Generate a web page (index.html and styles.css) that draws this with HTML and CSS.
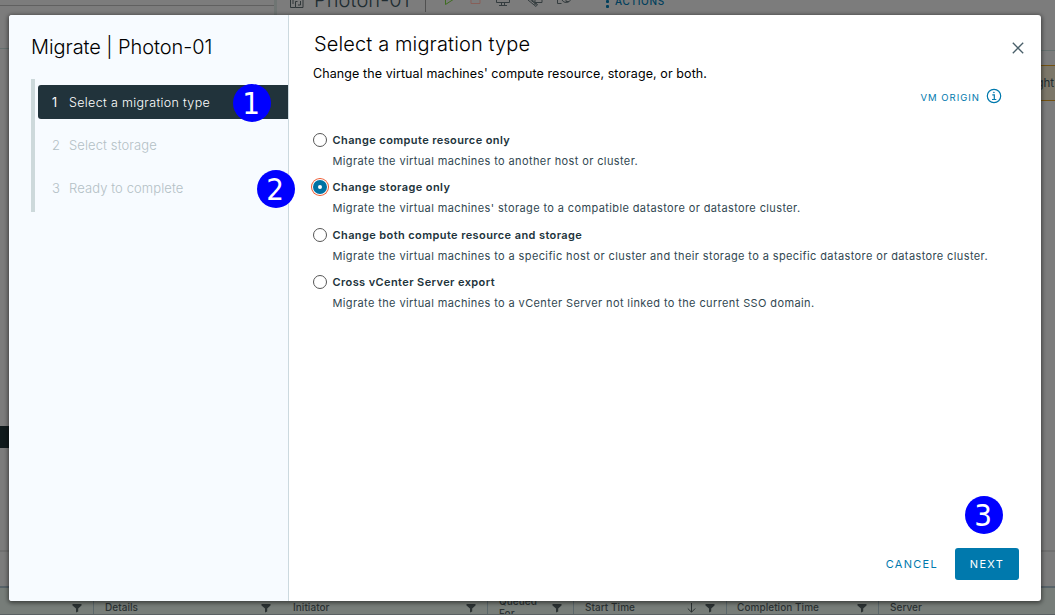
FILE: index.html
```html
<!DOCTYPE html>
<html lang="en">
<head>
<meta charset="utf-8">
<title>Migrate | Photon-01</title>
<link rel="stylesheet" href="styles.css">
</head>
<body>
<svg class="defs" width="0" height="0"><symbol id="funnel" viewBox="0 0 10 9"><path d="M.5 0h9v1.600L6.200 4.600V7.600L4 8.600V4.600L.5 1.600z" fill="currentColor"/></symbol></svg>
<div class="app">
  <div class="workspace">
    <aside class="inventory"><div class="inv-tabs"></div><div class="inv-tools"></div><div class="inv-tree"></div><div class="inv-selected"></div></aside>
    <main class="vm">
      <header class="vm-header">
        <svg class="vm-icon" width="16" height="9" viewBox="0 0 16 9" fill="none" stroke="currentColor"><path d="M1.500 0v7.500h5M6.500 1.500v6h7.500V0M4 0v4M6.500 1.500h2M9 5h2.500V1"/></svg>
        <div class="vm-name">Photon-01</div>
        <div class="vm-sep"></div>
        <svg class="vm-actions" width="150" height="9" viewBox="0 0 150 9" fill="none" stroke="currentColor"><path stroke="#3f6d20" d="M.5-1v5.500L9-1"/><path stroke="#875f58" d="M26 0v3.500h9V0"/><path d="M51.500 0v2.500h13V0M54 5.500h8M56.500 2.500v3M59.500 2.500v3"/><path d="M83 0l8 6.500 1.500-2-6-5M85.500 0l6 4.500M90 2.500h7V0M90 0v5"/><path d="M112.500 0v3.500h4M117 0a4.800 4.800 0 0 0 8.500 0M121-1v2.500h3"/></svg>
        <div class="dots"><i></i><i></i></div><div class="vm-menu">ACTIONS</div>
      </header>
      <div class="vm-banner">ght</div>
    </main>
  </div>
  <div class="splitter"></div>
  <div class="tasks">
    <div class="cell c0"><span></span><svg><use href="#funnel"/></svg></div>
    <div class="cell c1"><span>Details</span><svg><use href="#funnel"/></svg></div>
    <div class="cell c2"><span>Initiator</span><svg><use href="#funnel"/></svg></div>
    <div class="cell c3"><span>Queued<br>For</span><svg><use href="#funnel"/></svg></div>
    <div class="cell c4"><span>Start Time</span><svg class="sort" viewBox="0 0 10 10" fill="none" stroke="currentColor"><path d="M4.500 0v9M.8 5.500l3.700 3.700 3.700-3.700"/></svg><svg><use href="#funnel"/></svg></div>
    <div class="cell c5"><span>Completion Time</span><svg><use href="#funnel"/></svg></div>
    <div class="cell c6"><span>Server</span></div>
  </div>
</div>

<div class="modal">
  <nav class="side">
    <h1 class="side-title">Migrate | Photon-01</h1>
    <ol class="steps">
      <li class="step active"><b class="num">1</b><span>Select a migration type</span></li>
      <li class="step"><b class="num">2</b><span>Select storage</span></li>
      <li class="step"><b class="num">3</b><span>Ready to complete</span></li>
    </ol>
  </nav>
  <section class="content">
    <div class="head"><h2 class="title">Select a migration type</h2>
      <svg class="close" width="12" height="12" viewBox="0 0 12 12" stroke="#495f69" stroke-width="1.300"><path d="M.8.8l10.400 10.400M11.200.8L.8 11.200"/></svg></div>
    <p class="subtitle">Change the virtual machines' compute resource, storage, or both.</p>
    <div class="origin"><span>VM ORIGIN</span>
      <svg width="16" height="16" viewBox="0 0 16 16" fill="none" stroke="#0079ad" stroke-width="1.200"><circle cx="8" cy="8" r="6.700"/><path d="M6.300 6.900H8.300v4.500M6 11.500h4.300"/><circle cx="7.900" cy="4.400" r=".5" fill="#0079ad" stroke-width=".6"/></svg></div>
    <div class="options">
      <div class="option"><i class="radio"></i><div><div class="label">Change compute resource only</div><div class="desc">Migrate the virtual machines to another host or cluster.</div></div></div>
      <div class="option"><i class="radio checked"></i><div><div class="label">Change storage only</div><div class="desc">Migrate the virtual machines' storage to a compatible datastore or datastore cluster.</div></div></div>
      <div class="option"><i class="radio"></i><div><div class="label">Change both compute resource and storage</div><div class="desc">Migrate the virtual machines to a specific host or cluster and their storage to a specific datastore or datastore cluster.</div></div></div>
      <div class="option"><i class="radio"></i><div><div class="label">Cross vCenter Server export</div><div class="desc">Migrate the virtual machines to a vCenter Server not linked to the current SSO domain.</div></div></div>
    </div>
    <footer class="footer"><span class="cancel">CANCEL</span><span class="next">NEXT</span></footer>
  </section>
</div>
<div class="badge b1">1</div>
<div class="badge b2">2</div>
<div class="badge b3">3</div>
</body>
</html>
```
FILE: styles.css
```css
* { box-sizing: border-box; }
body { margin: 0; width: 1055px; height: 615px; overflow: hidden; background: #7c7c7c; font-family: Inter, "Liberation Sans", sans-serif; color: #000; }
.defs { position: absolute; }
h1, h2, p, ol { margin: 0; padding: 0; font-weight: 300; list-style: none; }

.app { height: 615px; display: flex; flex-direction: column; color: #202c31; }
.workspace { height: 550px; flex: none; display: flex; }
.inventory { width: 277px; border-right: 3px solid #6f7573; }
.inv-tabs { height: 6px; border-bottom: 1px solid #606060; }
.inv-tools { height: 43px; border-bottom: 1px solid #65706f; }
.inv-tree { height: 377px; }
.inv-selected { height: 22px; background: #101a1c; }
.vm { flex: 1; }
.vm-header { height: 51px; padding-left: 12px; display: flex; align-items: flex-start; border-bottom: 1px solid #65706f; }
.vm-icon { color: #303739; }
.vm-name { width: 111px; margin: -12px 0 0 9px; font-size: 20px; line-height: 24px; font-weight: 300; letter-spacing: .1px; }
.vm-sep { width: 1px; height: 12px; background: #505050; }
.vm-actions { margin-left: 19px; color: #343c3f; }
.dots { margin: 0 6px 0 11px; display: grid; gap: 2px; }
.dots i { width: 3px; height: 3px; border-radius: 1px; background: #003f5c; }
.vm-menu { margin-top: -5px; font-size: 10px; line-height: 13px; letter-spacing: .7px; color: #003f5c; font-weight: 500; }
.vm-banner { height: 36px; margin-top: 14px; padding-right: 1px; text-align: right; font-size: 11.500px; line-height: 34px; background: #7c7769; border: solid #745211; border-width: 1px 0; }
.splitter { height: 38px; flex: none; border-top: 2px solid #707070; border-bottom: 2px solid #586369; }
.tasks { height: 27px; display: flex; background: #777d79; border-bottom: 1px solid #5a6062; overflow: hidden; }
.cell { display: flex; align-items: center; justify-content: space-between; border-right: 1px solid #5b676b; padding: 0 11px; font-size: 10px; line-height: 12px; font-weight: 500; letter-spacing: .05px; height: 37px; color: #2b3233; }
.cell svg { width: 10px; height: 9px; flex: none; margin-top: 3px; }
.cell .sort { height: 10px; margin: 2px 8px 0 auto; }
.c0 { width: 94px; }
.c1 { width: 188px; border: 0; }
.c2 { width: 206px; }
.c3 { width: 86px; }
.c4 { width: 153px; }
.c5 { width: 152px; padding-left: 10px; }
.c6 { border: 0; }

.modal { position: absolute; left: 9px; top: 15px; width: 1032px; height: 586px; display: flex; background: #fff; border-radius: 3px; overflow: hidden; box-shadow: 0 1px 4px 1px rgba(0,0,0,.5); }
.side { width: 280px; background: #f7fbff; border-right: 1px solid #ccd9df; padding: 20px 0 0 22px; }
.side-title { font-size: 20px; line-height: 24px; letter-spacing: -.07px; white-space: nowrap; }
.steps { margin-top: 20px; height: 133px; border-left: 4px solid #cdd9db; padding: 6px 0 0 3px; }
.step { height: 34px; margin-bottom: 9.500px; padding: 0 0 2px 14px; display: flex; align-items: center; font-size: 13px; letter-spacing: .1px; white-space: nowrap; color: #b3c0c5; }
.num { width: 17px; font-weight: 300; }
.active { background: #21333b; color: #fff; border-radius: 3px 0 0 3px; padding-bottom: 0; font-size: 12.500px; letter-spacing: .34px; }
.active .num { font-weight: 400; }

.content { flex: 1; display: flex; flex-direction: column; padding: 17px 22px 21px 24px; }
.head { display: flex; justify-content: space-between; height: 32px; }
.title { font-size: 20px; line-height: 24px; letter-spacing: .13px; white-space: nowrap; padding-left: 1px; }
.close { margin: 10px -5px 0 0; }
.subtitle { font-size: 12.500px; line-height: 20px; letter-spacing: .09px; font-weight: 400; white-space: nowrap; }
.origin { display: flex; justify-content: flex-end; align-items: center; height: 16px; margin: 4px 17px 0 0; gap: 6px; color: #0079ad; font-size: 9.500px; letter-spacing: 1px; }
.origin span { padding-top: 2px; }
.options { margin-top: 27px; flex: 1; display: grid; grid-template-rows: 47px 48px 47px 47px; align-content: start; }
.option { display: flex; gap: 5.500px; color: #314751; }
.radio { width: 14px; height: 14px; margin-top: 2px; border: 1px solid #565656; border-radius: 50%; background: #fff; }
.checked { border: 5px solid #0072a3; box-shadow: 0 0 0 1px #fff, 0 0 0 2px #ed5930; }
.label { font-size: 11px; line-height: 18px; font-weight: 600; letter-spacing: .4px; color: #21333b; white-space: nowrap; }
.desc { margin-top: 3px; font-size: 11px; line-height: 18px; letter-spacing: .385px; white-space: nowrap; }
.footer { display: flex; justify-content: flex-end; height: 32px; font-size: 11px; line-height: 32px; letter-spacing: 1.300px; }
.cancel { color: #0079ad; margin-right: 17px; }
.next { width: 64px; background: #0079ad; color: #fff; border-radius: 3px; text-align: center; }

.badge { position: absolute; width: 38px; height: 38px; padding-right: 2px; border-radius: 50%; background: #00f; color: #fff; font: 31px/38px "DejaVu Sans Condensed", "DejaVu Sans", sans-serif; font-stretch: condensed; text-align: center; }
.b1 { left: 233px; top: 84px; }
.b2 { left: 257px; top: 170px; }
.b3 { left: 965px; top: 496px; }
```
